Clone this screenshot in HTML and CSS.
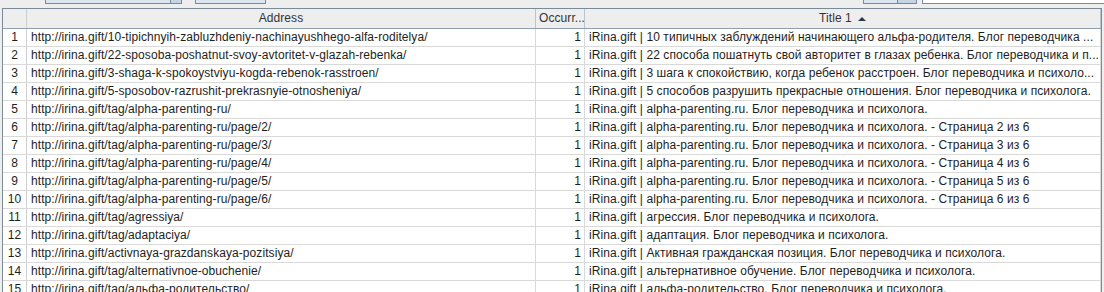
FILE: index.html
```html
<!DOCTYPE html>
<html>
<head>
<meta charset="utf-8">
<link rel="stylesheet" href="styles.css">
</head>
<body>
<div class="topbar">
  <div class="combo"><div class="combo-field"></div><div class="combo-arrow"></div></div>
  <div class="btn btn-wide"></div>
  <div class="spacer"></div>
  <div class="combo combo-small"><div class="combo-field"></div><div class="combo-arrow"></div></div>
  <div class="search"></div>
</div>
<div class="pane">
  <div class="row head">
    <div class="cell"></div>
    <div class="cell center">Address</div>
    <div class="cell">Occurr...</div>
    <div class="cell center"><span>Title 1</span><span class="sort"></span></div>
  </div>
  <div class="row"><div class="cell num">1</div><div class="cell">http://irina.gift/10-tipichnyih-zabluzhdeniy-nachinayushhego-alfa-roditelya/</div><div class="cell right">1</div><div class="cell">iRina.gift | 10 типичных заблуждений начинающего альфа-родителя. Блог переводчика ...</div></div>
  <div class="row"><div class="cell num">2</div><div class="cell">http://irina.gift/22-sposoba-poshatnut-svoy-avtoritet-v-glazah-rebenka/</div><div class="cell right">1</div><div class="cell">iRina.gift | 22 способа пошатнуть свой авторитет в глазах ребенка. Блог переводчика и п...</div></div>
  <div class="row"><div class="cell num">3</div><div class="cell">http://irina.gift/3-shaga-k-spokoystviyu-kogda-rebenok-rasstroen/</div><div class="cell right">1</div><div class="cell">iRina.gift | 3 шага к спокойствию, когда ребенок расстроен. Блог переводчика и психоло...</div></div>
  <div class="row"><div class="cell num">4</div><div class="cell">http://irina.gift/5-sposobov-razrushit-prekrasnyie-otnosheniya/</div><div class="cell right">1</div><div class="cell">iRina.gift | 5 способов разрушить прекрасные отношения. Блог переводчика и психолога.</div></div>
  <div class="row"><div class="cell num">5</div><div class="cell">http://irina.gift/tag/alpha-parenting-ru/</div><div class="cell right">1</div><div class="cell">iRina.gift | alpha-parenting.ru. Блог переводчика и психолога.</div></div>
  <div class="row"><div class="cell num">6</div><div class="cell">http://irina.gift/tag/alpha-parenting-ru/page/2/</div><div class="cell right">1</div><div class="cell">iRina.gift | alpha-parenting.ru. Блог переводчика и психолога. - Страница 2 из 6</div></div>
  <div class="row"><div class="cell num">7</div><div class="cell">http://irina.gift/tag/alpha-parenting-ru/page/3/</div><div class="cell right">1</div><div class="cell">iRina.gift | alpha-parenting.ru. Блог переводчика и психолога. - Страница 3 из 6</div></div>
  <div class="row"><div class="cell num">8</div><div class="cell">http://irina.gift/tag/alpha-parenting-ru/page/4/</div><div class="cell right">1</div><div class="cell">iRina.gift | alpha-parenting.ru. Блог переводчика и психолога. - Страница 4 из 6</div></div>
  <div class="row"><div class="cell num">9</div><div class="cell">http://irina.gift/tag/alpha-parenting-ru/page/5/</div><div class="cell right">1</div><div class="cell">iRina.gift | alpha-parenting.ru. Блог переводчика и психолога. - Страница 5 из 6</div></div>
  <div class="row"><div class="cell num">10</div><div class="cell">http://irina.gift/tag/alpha-parenting-ru/page/6/</div><div class="cell right">1</div><div class="cell">iRina.gift | alpha-parenting.ru. Блог переводчика и психолога. - Страница 6 из 6</div></div>
  <div class="row"><div class="cell num">11</div><div class="cell">http://irina.gift/tag/agressiya/</div><div class="cell right">1</div><div class="cell">iRina.gift | агрессия. Блог переводчика и психолога.</div></div>
  <div class="row"><div class="cell num">12</div><div class="cell">http://irina.gift/tag/adaptaciya/</div><div class="cell right">1</div><div class="cell">iRina.gift | адаптация. Блог переводчика и психолога.</div></div>
  <div class="row"><div class="cell num">13</div><div class="cell">http://irina.gift/activnaya-grazdanskaya-pozitsiya/</div><div class="cell right">1</div><div class="cell">iRina.gift | Активная гражданская позиция. Блог переводчика и психолога.</div></div>
  <div class="row"><div class="cell num">14</div><div class="cell">http://irina.gift/tag/alternativnoe-obuchenie/</div><div class="cell right">1</div><div class="cell">iRina.gift | альтернативное обучение. Блог переводчика и психолога.</div></div>
  <div class="row"><div class="cell num">15</div><div class="cell">http://irina.gift/tag/альфа-родительство/</div><div class="cell right">1</div><div class="cell">iRina.gift | альфа-родительство. Блог переводчика и психолога.</div></div>
</div>
</body>
</html>
```

FILE: styles.css
```css
html, body {
  margin: 0;
  padding: 0;
  background: #eeeeee;
  overflow: hidden;
}
body {
  font-family: "Liberation Sans", Arial, sans-serif;
  font-size: 12px;
  letter-spacing: 0.075px;
  color: #1e1e1e;
  width: 1104px;
  height: 292px;
}
.topbar {
  height: 8px;
  display: flex;
  align-items: flex-start;
  padding-left: 45px;
}
.combo {
  display: flex;
  height: 4px;
}
.combo-field {
  width: 126px;
  height: 4px;
  box-sizing: border-box;
  border: 1px solid #7a8a99;
  border-top: none;
  background: #dce6f0;
}
.combo-arrow {
  width: 11px;
  height: 4px;
  box-sizing: border-box;
  border: 1px solid #7a8a99;
  border-top: none;
  border-left: none;
  background: #c5d5e6;
}
.btn-wide {
  margin-left: 13px;
  width: 71px;
  height: 4px;
  box-sizing: border-box;
  border: 1px solid #7a8a99;
  border-top: none;
  background: #dce6f0;
}
.spacer {
  flex: 1;
}
.combo-small .combo-field {
  width: 35px;
}
.combo-small .combo-arrow {
  width: 19px;
}
.search {
  margin-left: 5px;
  width: 182px;
  height: 4px;
  box-sizing: border-box;
  border: 1px solid #7a8a99;
  border-top: none;
  border-right: none;
  background: #ffffff;
}
.pane {
  margin-left: 2px;
  width: 1100px;
  height: 284px;
  box-sizing: border-box;
  border: 1px solid #7a8a99;
  border-bottom: none;
  background: #ffffff;
  overflow: hidden;
}
.row {
  display: grid;
  grid-template-columns: 24px 509px 49px 516px;
  height: 18px;
  box-sizing: border-box;
  border-bottom: 1px solid #d9d9d9;
  line-height: 17px;
}
.cell {
  box-sizing: border-box;
  border-right: 1px solid #d9d9d9;
  padding: 0 3px 0 4px;
  white-space: nowrap;
  overflow: hidden;
}
.row .cell:first-child {
  border-right-color: #cfcfcf;
}
.num {
  text-align: center;
  padding: 0;
}
.right {
  text-align: right;
  padding: 0 3px 0 2px;
}
.center {
  text-align: center;
}
.head {
  height: 20px;
  background: #eeeeee;
  border-bottom: 1px solid #8e9fb0;
  line-height: 19px;
  color: #333333;
}
.head .cell {
  border-right: 1px solid #b8c4d0;
  display: flex;
  align-items: center;
  padding-left: 3px;
}
.head .cell.center {
  justify-content: center;
}
.sort {
  display: inline-block;
  width: 0;
  height: 0;
  margin-left: 6px;
  border-left: 4px solid transparent;
  border-right: 4px solid transparent;
  border-bottom: 4px solid #2b3a4a;
}
```
